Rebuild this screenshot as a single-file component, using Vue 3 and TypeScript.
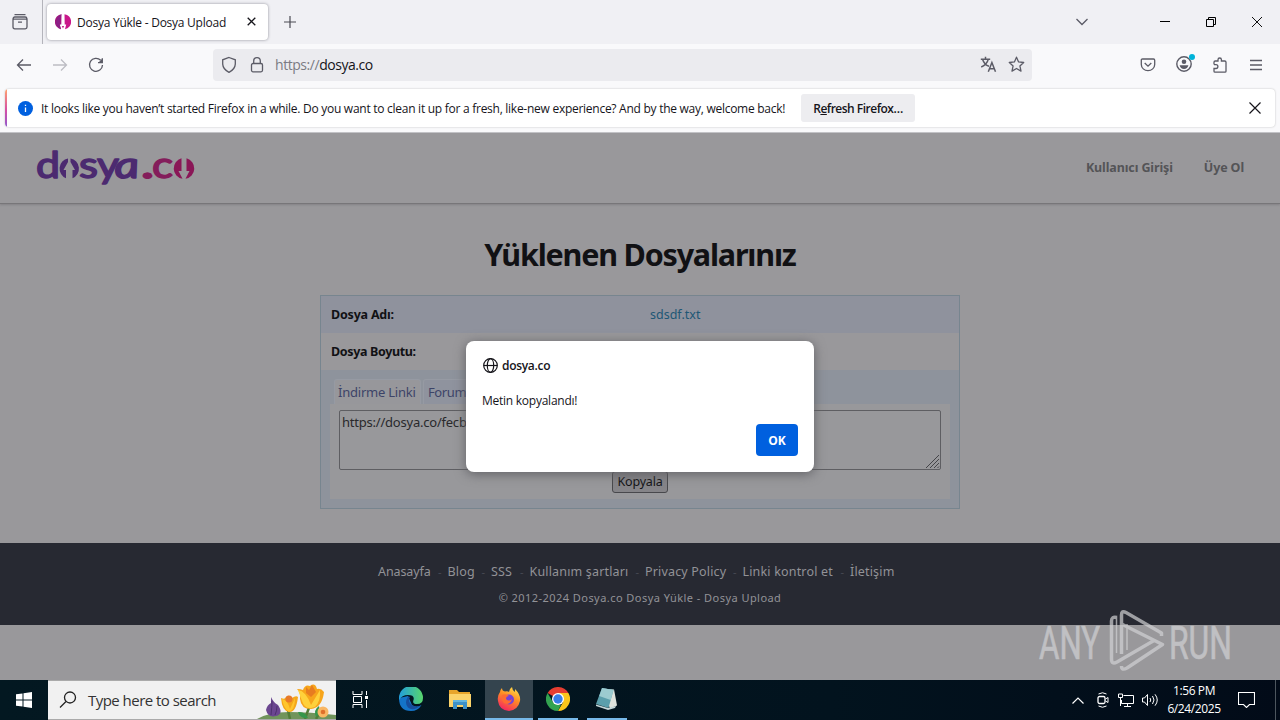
<script setup lang="ts">
interface FooterLink {
  label: string
  width: number
}

const footerLinks: FooterLink[] = [
  { label: 'Anasayfa', width: 53 },
  { label: 'Blog', width: 27 },
  { label: 'SSS', width: 22 },
  { label: 'Kullanım şartları', width: 99 },
  { label: 'Privacy Policy', width: 81 },
  { label: 'Linki kontrol et', width: 91 },
  { label: 'İletişim', width: 44 },
]
</script>

<template>
  <div class="screen">
    <header class="tabbar">
      <div class="archive">
        <svg width="18" height="18" viewBox="0 0 18 18" class="line">
          <path d="M3.5 1.7h11M2.2 7V5.6q0-1.6 1.6-1.6h10.4q1.6 0 1.6 1.6V7M2 6.2h14v7.9q0 1.700-1.700 1.700H3.700Q2 15.800 2 14.100zM7 9.200h4" />
        </svg>
      </div>
      <div class="tab">
        <svg class="favicon" width="16" height="16" viewBox="0 0 16 16">
          <path d="M6.500 .2A7.600 7.600 0 0 0 6 15.200L4.800 10.500H6.300z" fill="#a3187e" />
          <path d="M9.500 .2A7.600 7.600 0 0 1 10 15.200L11.200 10.500H9.700z" fill="#c9188a" />
          <path d="M6.500 .2Q2 2 1 8Q1 13 6 15.200Q4 11 4.800 8Q5 3 6.500 .2z" fill="#8a2087" />
          <path d="M6.900 12h2.200L8 14.500z" fill="#c21585" />
        </svg>
        <span class="tab-title">Dosya Yükle - Dosya Upload</span>
        <svg class="tab-close" width="9" height="9" viewBox="0 0 9 9"><path d="M.7.7l7.600 7.600M8.300.7L.7 8.300" stroke="#15141a" stroke-width="1.300" /></svg>
      </div>
      <svg class="plus" width="12" height="12" viewBox="0 0 12 12"><path d="M6 0v12M0 6h12" stroke="#4a4a52" stroke-width="1.200" /></svg>
      <div class="window-buttons">
        <svg width="12" height="8" viewBox="0 0 12 8" class="line"><path d="M.5 1L6 6.500 11.500 1" /></svg>
        <svg width="10" height="10" viewBox="0 0 10 10"><path d="M0 4.500h10" stroke="#000" /></svg>
        <svg width="10" height="10" viewBox="0 0 10 10"><path d="M.5 2.500h7v7h-7zM2.500 2V.5h7v7H8" fill="none" stroke="#000" /></svg>
        <svg width="10" height="10" viewBox="0 0 10 10"><path d="M0 0l10 10M10 0L0 10" stroke="#111" /></svg>
      </div>
    </header>

    <nav class="toolbar">
      <div class="nav-buttons">
        <svg width="16" height="16" viewBox="0 0 16 16" class="line"><path d="M15 8H1.500M7 2.500L1.500 8 7 13.500" /></svg>
        <svg width="16" height="16" viewBox="0 0 16 16" class="line pale"><path d="M1 8h13.500M9 2.500L14.500 8 9 13.500" /></svg>
        <svg width="16" height="16" viewBox="0 0 16 16" class="line"><path d="M12.700 3.300A6.500 6.500 0 1 0 14.500 8M14.300 1.300v4.300H10" /><path d="M14.500 1.500V5.600H10.500z" fill="#5b5b66" stroke="none" /></svg>
      </div>
      <div class="urlbar">
        <svg width="16" height="18" viewBox="0 0 16 18" class="line"><path d="M8 1.500l6.300 2.300v4.300Q14 13.300 8 16.300 2 13.300 1.700 8.100V3.800z" /></svg>
        <svg width="14" height="18" viewBox="0 0 14 18" class="line"><rect x="1.500" y="7.500" width="11" height="8.300" rx="1.500" /><path d="M3.700 7.500V5a3.300 3.300 0 0 1 6.600 0v2.500" /></svg>
        <span class="url"><span class="scheme">https://</span><span>dosya.co</span></span>
        <svg width="17" height="17" viewBox="0 0 17 17" class="line"><path d="M.8 3.200h9.400M5.500.8v2.400M2.500 3.200Q4.500 9 9 10.200M8.300 3.200Q7 8.700 1.200 11M8.300 15.700l3.600-9.200 3.600 9.200M9.500 12.700h4.800" stroke-width="1.500" /></svg>
        <svg width="17" height="17" viewBox="0 0 17 17" class="line"><path d="M8.500 1.200l2.100 4.700 5.100.6-3.800 3.400 1.100 5.200-4.500-2.600L4 15.100l1.100-5.200L1.300 6.500l5.100-.6z" stroke-linejoin="round" /></svg>
      </div>
      <div class="tools">
        <svg width="16" height="16" viewBox="0 0 16 16" class="line"><path d="M2.500 2h11q1.200 0 1.200 1.200V7.500a6.700 6.200 0 0 1-13.400 0V3.200Q1.300 2 2.500 2zM4.700 6L8 9.200 11.300 6" /></svg>
        <svg width="20" height="20" viewBox="0 0 20 20"><circle cx="9" cy="11" r="7.200" fill="none" stroke="#5b5b66" stroke-width="1.400" /><circle cx="9" cy="8.800" r="2.300" fill="#5b5b66" /><path d="M4.600 12.300h8.800Q12.600 16 9 16T4.600 12.300z" fill="#5b5b66" /><circle cx="17" cy="4" r="3" fill="#00b3d9" /></svg>
        <svg width="16" height="16" viewBox="0 0 16 16" class="line"><path d="M2 7.500V5.200Q2 4 3.200 4H6V2.700a1.700 1.700 0 0 1 3.400 0V4h3.400q1.200 0 1.200 1.200v9.100q0 .9-1 .9H3q-1 0-1-1V11.500h2a1.900 1.900 0 0 0 0-3.800H2" /></svg>
        <svg width="12" height="12" viewBox="0 0 12 12" class="line"><path d="M0 1.500h12M0 6h12M0 10.500h12" /></svg>
      </div>
    </nav>

    <div class="notice-wrap">
      <div class="notice">
        <svg class="info" width="15" height="15" viewBox="0 0 15 15"><circle cx="7.500" cy="7.500" r="7.500" fill="#0060df" /><path d="M7.500 6.500v4.500M7.500 3.700v1.400" stroke="#fff" stroke-width="1.300" /></svg>
        <span class="notice-text">It looks like you haven’t started Firefox in a while. Do you want to clean it up for a fresh, like-new experience? And by the way, welcome back!</span>
        <button class="refresh">R<u>e</u>fresh Firefox…</button>
        <svg class="notice-close" width="12" height="12" viewBox="0 0 12 12"><path d="M.5.5l11 11M11.500.5l-11 11" stroke="#15141a" stroke-width="1.200" /></svg>
      </div>
    </div>

    <main class="page">
      <div class="site-header">
        <svg class="logo" width="162" height="56" viewBox="0 -10 162 56">
          <g class="wordmark violet">
            <text x="0" y="31" textLength="24" lengthAdjust="spacingAndGlyphs">d</text>
            <text x="43" y="31" textLength="19" lengthAdjust="spacingAndGlyphs">s</text>
            <text x="61" y="31" textLength="22" lengthAdjust="spacingAndGlyphs">y</text>
            <text class="slanted" transform="translate(79.500 31) skewX(7)" textLength="25" lengthAdjust="spacingAndGlyphs">a</text>
          </g>
          <g class="wordmark magenta">
            <text x="105" y="31" textLength="13" lengthAdjust="spacingAndGlyphs" stroke-width="2">.</text>
            <text x="116" y="31" textLength="21" lengthAdjust="spacingAndGlyphs">c</text>
          </g>
          <path d="M32 11.500a10 10.300 0 0 0-2 19.800V23h-2.500L32 15zM34.500 11.500a10 10.300 0 0 1 2 19.800V23H39L34.500 15z" fill="#4c2a70" />
          <path d="M145.500 11.300a10.200 10.400 0 0 0 1 20.400L142.500 24h3zM150.500 11.300a10.200 10.400 0 0 1-1 20.400L153.500 24h-3z" fill="#8a1657" />
        </svg>
        <div class="account">
          <span class="login">Kullanıcı Girişi</span>
          <span class="signup">Üye Ol</span>
        </div>
      </div>

      <h1>Yüklenen Dosyalarınız</h1>

      <section class="files">
        <div class="row shaded"><b class="name-label">Dosya Adı:</b><a>sdsdf.txt</a></div>
        <div class="row"><b class="size-label">Dosya Boyutu:</b></div>
        <div class="links">
          <div class="link-tabs">
            <span class="link-tab active">İndirme Linki</span>
            <span class="link-tab forum">Forum</span>
          </div>
          <div class="panel">
            <div class="linkbox">
              <span>https://dosya.co/fecb</span>
              <svg width="15" height="15" viewBox="0 0 15 15"><path d="M1 14L14 1M5 14l9-9M9 14l5-5M12.500 14l1.500-1.500" stroke="#444448" fill="none" /></svg>
            </div>
            <button class="copy">Kopyala</button>
          </div>
        </div>
      </section>

      <footer>
        <div class="footer-links">
          <template v-for="(link, i) in footerLinks" :key="link.label">
            <span v-if="i > 0" class="dash">-</span>
            <span class="footer-link" :style="{ width: link.width + 'px' }">{{ link.label }}</span>
          </template>
        </div>
        <div class="copyright">© 2012-2024 Dosya.co Dosya Yükle - Dosya Upload</div>
      </footer>

      <svg class="watermark" width="204" height="68" viewBox="0 0 204 68">
        <g class="brand">
          <text x="2" y="50" textLength="61" lengthAdjust="spacingAndGlyphs">ANY</text>
          <text x="132" y="50" textLength="63" lengthAdjust="spacingAndGlyphs">RUN</text>
        </g>
        <g class="mark">
          <path d="M80 8.500Q74.500 7 74.500 12V50Q74.500 56 80 53L117 31.500" />
          <path d="M84.500 45V6Q84.500 1 89 3.500L124.500 24V27" />
          <path d="M84.500 15L125.500 35.500 90 59Q84.500 62 84.500 57" />
          <path d="M79.500 8V44M90 15V41" stroke-width="1.500" />
        </g>
      </svg>
    </main>

    <div class="taskbar">
      <div class="start">
        <svg width="16" height="16" viewBox="0 0 16 16" fill="#fff"><path d="M0 2.300L6.500 1.400V7.500H0zM7.500 1.200L16 0V7.500H7.500zM0 8.500h6.500v6.100L0 13.700zM7.500 8.500H16V16L7.500 14.800z" /></svg>
      </div>
      <div class="search">
        <svg width="18" height="18" viewBox="0 0 18 18"><circle cx="11" cy="6.500" r="5.500" fill="none" stroke="#222" stroke-width="1.300" /><path d="M7 10.500L1 16.500" stroke="#222" stroke-width="1.300" /></svg>
        <span>Type here to search</span>
        <svg class="flowers" width="79" height="38" viewBox="0 0 79 38">
          <path d="M0 38Q12 31 32 31T79 34V38z" fill="#70945b" />
          <path d="M33 38Q32 34 31 29M48 38Q50 32 53 24M59 38Q63 32 64 27" fill="none" stroke="#527d38" stroke-width="2.500" />
          <path d="M14 16Q16 21 21 24Q27 33 19 35T9 29Q10 24 14 22z" fill="#6b4690" /><path d="M15 20Q15 26 14 34M20 25Q20 30 18 34" fill="none" stroke="#4c326d" />
          <path d="M24 17Q28 19 29 16Q32 13 35 17Q39 14 41 16Q39 32 32 31Q25 30 24 17z" fill="#f5a719" />
          <path d="M25 18Q30 18 33 28L38 17Q38 29 32 31Q27 28 25 18z" fill="#ffc52c" /><circle cx="32" cy="18" r="3.500" fill="#e7792a" />
          <path d="M40 8Q44 8 46 9Q48 3 53 5Q58 1 60 8Q64 7 67 11Q65 27 54 28Q44 28 43 18Q44 12 40 8z" fill="#f7a51b" />
          <path d="M41 9Q49 10 54 24L63 9Q64 20 58 26Q48 30 45 20z" fill="#ffd13b" /><path d="M49 6l3 3 3-5 4 7-5 5-5-4z" fill="#e77c20" />
          <path d="M41 31Q48 30 51 37Q43 38 41 31zM59 36Q64 33 62 25Q56 29 59 36z" fill="#35964b" />
          <circle cx="66" cy="31" r="5.500" fill="#f9b764" /><circle cx="66" cy="31" r="2.300" fill="#df702c" />
        </svg>
      </div>
      <div class="task view">
        <svg width="16" height="17" viewBox="0 0 16 17" fill="none" stroke="#fff"><path d="M1 0v3.500h9V0M1 17v-3.500h9V17M1.500 5.500h8v6h-8zM14.500 0v4M14.500 9v8" /><path d="M13 5h3v3h-3z" fill="#fff" stroke="none" /></svg>
      </div>
      <div class="task edge">
        <svg width="24" height="24" viewBox="0 0 24 24">
          <defs>
            <linearGradient id="edge-top" x1="0" y1="0" x2="1" y2="0"><stop stop-color="#219edc" /><stop offset="1" stop-color="#58d66c" /></linearGradient>
          </defs>
          <path d="M0 11Q0 24 12 24Q19 24 22.500 18Q17 21 13 18L9 9z" fill="#1474c8" />
          <path d="M0 11A12 12 0 0 1 24 11Q24 17 18 17Q13 17 14.500 13Q16 8 9 8Q3 8 0 13z" fill="url(#edge-top)" />
          <path d="M9 9.500Q5 16 9 20.500Q14 25 22.500 18Q18 21 14 18.500Q8 15 11 10z" fill="#174e9d" />
        </svg>
      </div>
      <div class="task explorer">
        <svg width="22" height="20" viewBox="0 0 22 20"><path d="M0 1h8l2 2h11v4H0z" fill="#e7a52b" /><path d="M0 5h22v13H0z" fill="#fbd36a" /><path d="M4 11h14v9h-4v-4H8v4H4z" fill="#3c91c9" /><path d="M4 11h14v2H4z" fill="#62b5df" /></svg>
      </div>
      <div class="task firefox">
        <svg width="24" height="24" viewBox="0 0 24 24">
          <defs>
            <linearGradient id="fox" x1=".8" y1="0" x2=".3" y2="1"><stop stop-color="#ffe34b" /><stop offset=".45" stop-color="#ff8c24" /><stop offset="1" stop-color="#f52264" /></linearGradient>
          </defs>
          <path d="M3 5Q3 3 5 1Q5 4 8 4.500Q11 4 12 5Q12 2 15 0Q15 3 18 5Q18 3 18 2Q24 8 23 14Q21 23 12 24Q2 23 1 14Q0 9 3 5z" fill="url(#fox)" />
          <circle cx="12" cy="12.500" r="5" fill="#7542d5" /><path d="M5 8Q9 6 12 9Q9 9 9 12Q12 15 15 12Q13 19 7 16Q4 13 5 8z" fill="#ff6b32" />
        </svg>
      </div>
      <div class="task chrome">
        <svg width="24" height="24" viewBox="0 0 24 24">
          <path d="M12 12L1.600 6A12 12 0 0 1 22.400 6z" fill="#e53d31" />
          <path d="M12 6h10.400A12 12 0 0 1 12 24l5.200-9z" fill="#fbc51b" /><path d="M1.600 6l5.200 9 8 3L12 24A12 12 0 0 1 1.600 6z" fill="#32a350" /><circle cx="12" cy="12" r="6" fill="#fff" /><circle cx="12" cy="12" r="4.700" fill="#377de8" />
        </svg>
      </div>
      <div class="task notepad">
        <svg width="24" height="24" viewBox="0 0 24 24"><path d="M8 1.500l12 1 3 16-7 3z" fill="#dfe3dd" /><path d="M8 1l11.500 2-5 18L2 17z" fill="#5b9fac" /><path d="M8 1l11.500 2-2.800 10-11.500-4z" fill="#9ccbd0" /><path d="M2 17.500l12 3.500 8-2-1 2-7 2-12-4z" fill="#c4d7d9" /></svg>
      </div>
      <div class="tray">
        <svg width="12" height="7" viewBox="0 0 12 7" fill="none" stroke="#fff"><path d="M.5 6.500L6 1l5.500 5.500" stroke-width="1.200" /></svg>
        <svg width="12" height="16" viewBox="0 0 12 16" fill="none" stroke="#fff"><rect x="1" y="4.500" width="7" height="7" rx="1.500" stroke-width="1.300" /><path d="M8.500 7l2.500-1.500v5L8.500 9M1.500 2Q5.500-.5 9.500 2M1.500 14q4 2.500 8 0" /></svg>
        <svg width="17" height="14" viewBox="0 0 17 14" fill="none" stroke="#fff"><path d="M5.500 2.500h10v8h-12V7M9.500 10.500v3M6 13.500h7M.5 1h4v3.500h-4zM2.500 5v8" /></svg>
        <svg width="17" height="14" viewBox="0 0 17 14" fill="none" stroke="#fff"><path d="M.5 5h2l3-3.500v11L2.500 9h-2zM8 5q1.500 2 0 4M10.500 3q3 4 0 8M13 1.300q4.500 5.700 0 11.400" /></svg>
        <div class="clock"><span class="time">1:56 PM</span><span class="date">6/24/2025</span></div>
        <svg width="17" height="16" viewBox="0 0 17 16" fill="none" stroke="#fff"><path d="M.5.500h16v12h-5l-3 3-3-3h-5z" stroke-width="1.100" /></svg>
      </div>
      <div class="show-desktop"></div>
    </div>

    <div class="dialog" role="alertdialog">
      <div class="origin">
        <svg width="15" height="15" viewBox="0 0 15 15" fill="none" stroke="#15141a" stroke-width="1.200"><circle cx="7.500" cy="7.500" r="6.800" /><ellipse cx="7.500" cy="7.500" rx="3.200" ry="6.800" /><path d="M.7 7.500h13.600" /></svg>
        <span>dosya.co</span>
      </div>
      <p>Metin kopyalandı!</p>
      <button class="ok">OK</button>
    </div>
  </div>
</template>

<style>
body { overflow: hidden; }
</style>

<style scoped>
* { box-sizing: border-box; }
svg { display: block; flex: none; }
button { border: 0; padding: 0; font: inherit; }
.screen { position: relative; display: flex; flex-direction: column; width: 1280px; height: 720px; overflow: hidden; background: #99989b; color: #15141a; font-family: "Open Sans", "Noto Sans", sans-serif; font-size: 12px; white-space: nowrap; }
.line { fill: none; stroke: #5b5b66; stroke-width: 1.3; }
.pale { stroke: #bdbdc3; }
.tabbar { display: flex; align-items: center; height: 44px; flex: none; background: #f0f0f4; }
.archive { display: flex; align-items: center; width: 43px; height: 44px; padding-left: 11px; border-right: 1px solid #b4b4bb; }
.tab { display: flex; align-items: center; width: 221px; height: 36px; margin: 0 1px 1px 4px; padding-left: 8px; border-radius: 4px; background: #fff; box-shadow: 0 0 3px #8e8e96; }
.tab-title { width: 156px; margin-left: 6px; padding-top: 2px; letter-spacing: -0.25px; }
.tab-close { margin-left: 14px; }
.plus { margin-left: 15px; }
.window-buttons { display: flex; align-items: center; margin-left: auto; padding-right: 18px; }
.window-buttons svg + svg { margin-left: 36px; }
.window-buttons svg:nth-child(2) { margin-left: 72px; }
.toolbar { display: flex; align-items: center; height: 44px; flex: none; padding: 0 18px 3px 16px; background: #f9f9fb; }
.nav-buttons { display: flex; gap: 20px; width: 197px; }
.urlbar { display: flex; align-items: center; width: 819px; height: 32px; padding-left: 8px; border-radius: 4px; background: #ebebef; }
.urlbar svg:nth-child(2) { margin-left: 13px; }
.urlbar svg:nth-child(4) { margin-left: auto; }
.urlbar svg:nth-child(5) { margin: 0 7px 0 11px; }
.url { margin-left: 11px; font-size: 14px; letter-spacing: -0.45px; }
.scheme { color: #7b7b83; }
.tools { display: flex; align-items: center; margin-left: auto; }
.tools svg:nth-child(2) { margin: -3px 0 0 19px; }
.tools svg:nth-child(3) { margin-left: 17px; }
.tools svg:nth-child(4) { margin-left: 22px; }
.notice-wrap { height: 45px; flex: none; padding: 1px 5px 5px; background: #f9f9fb; border-bottom: 1px solid #c7c7cc; }
.notice { position: relative; display: flex; align-items: center; height: 38px; padding: 0 14px 0 13px; overflow: hidden; border-radius: 4px; background: #fff; box-shadow: 0 0 2px #bbb; }
.notice::before { content: ""; position: absolute; inset: 0 auto 0 0; width: 2px; background: linear-gradient(#ffa36e, #d64fa5 55%, #9059cc); }
.notice-text { width: 745px; margin: 1px 0 0 8px; letter-spacing: -0.267px; }
.refresh { width: 114px; height: 28px; margin-left: 15px; border-radius: 3px; background: #ededf0; color: #15141a; font-weight: 600; letter-spacing: -0.5px; }
.notice-close { margin-left: auto; }
.page { position: relative; height: 547px; flex: none; color: #111114; font-family: "Noto Sans", "Open Sans", sans-serif; }
.site-header { display: flex; align-items: center; justify-content: space-between; height: 71px; padding: 0 36px; border-bottom: 1px solid #777679; box-shadow: 0 1px 2px #838286; }
.logo { margin-bottom: 7px; }
.wordmark { font: 400 37px Lato, sans-serif; stroke-width: 1.5; stroke-linejoin: round; }
.wordmark .slanted { font-style: italic; }
.violet { fill: #4c2a70; stroke: #4c2a70; }
.magenta { fill: #841d5b; stroke: #841d5b; }
.account { display: flex; gap: 31px; padding-bottom: 2px; font-size: 12.5px; font-weight: 700; letter-spacing: -0.12px; color: #545457; }
h1 { display: flex; justify-content: center; margin: 28px 0 19px; height: 44px; align-items: center; font-size: 30.5px; font-weight: 700; letter-spacing: -1.2px; }
.files { width: 640px; height: 214px; margin: 0 auto; border: 1px solid #77858f; }
.row { display: flex; align-items: center; height: 37px; padding-left: 10px; font-size: 12.5px; }
.shaded { background: #8f929d; }
.row b { width: 319px; letter-spacing: -0.2px; }
.row .size-label { letter-spacing: -0.35px; }
.row a { color: #1e5775; }
.links { height: 138px; padding: 9px; background: #8e939c; }
.link-tabs { display: flex; gap: 2px; height: 25px; padding-left: 4px; font-size: 13px; letter-spacing: -0.22px; color: #3d4468; }
.link-tab { height: 25px; padding: 3px; border: 1px solid #969aa3; border-bottom: 0; border-radius: 3px 3px 0 0; }
.active { width: 87px; background: #97979b; }
.forum { width: 90px; padding-left: 4px; letter-spacing: -0.4px; background: #8f939e; }
.panel { display: flex; flex-direction: column; align-items: center; height: 95px; padding-top: 6px; background: #98989b; }
.linkbox { display: flex; align-items: flex-end; justify-content: space-between; width: 602px; height: 60px; border: 1px solid #5e5e62; border-radius: 2px; color: #29292c; font-size: 13px; }
.linkbox span { align-self: flex-start; padding: 2px; letter-spacing: -0.22px; }
.copy { width: 56px; height: 22px; margin-top: 1px; border: 1px solid #48484c; border-radius: 3px; background: #858488; color: #111114; font-size: 12.5px; letter-spacing: -0.2px; line-height: 18px; }
footer { height: 82px; margin-top: 34px; padding-top: 17px; background: #272932; color: #929297; }
.footer-links { display: flex; justify-content: center; align-items: center; height: 22px; margin-left: -8px; font-size: 12.5px; letter-spacing: .17px; }
.footer-link { display: block; }
.footer-link:first-child { letter-spacing: -0.1px; }
.dash { width: 16.5px; padding-left: 7px; color: #484a54; font-size: 11px; }
.copyright { height: 20px; margin-top: 6px; font-size: 11px; line-height: 20px; text-align: center; letter-spacing: .45px; }
.watermark { position: absolute; left: 1037px; top: 476px; opacity: .7; }
.brand { fill: #d1d1d4; stroke: #d1d1d4; stroke-width: .7; font: 46px Roboto, sans-serif; font-weight: 400; }
.mark { fill: none; stroke: #d1d1d4; stroke-width: 3.5; stroke-linejoin: round; }
.taskbar { display: flex; height: 40px; flex: none; background: linear-gradient(90deg, #031821, #02131e 65%, #020b18); color: #fff; }
.start { display: flex; align-items: center; justify-content: center; width: 48px; }
.search { display: flex; align-items: center; width: 288px; border-top: 1px solid #aaa; border-bottom: 1px solid #aaa; background: #f1f1f1; color: #333; font-size: 15px; }
.search > svg:first-child { margin-left: 11px; }
.search span { width: 132px; margin-left: 11px; letter-spacing: -0.53px; }
.flowers { margin-left: auto; }
.task { display: flex; align-items: center; justify-content: center; width: 49px; border-bottom: 2px solid transparent; }
.view { padding-right: 2px; }
.edge { width: 52px; }
.explorer { width: 47px; padding-right: 2px; }
.firefox { width: 48px; margin-left: 1px; background: #34444e; border-color: #77b9e9; }
.chrome { width: 40px; margin-left: 5px; border-color: #77b9e9; }
.notepad { width: 40px; margin-left: 9px; padding-right: 2px; border-color: #77b9e9; }
.tray { display: flex; align-items: center; margin-left: auto; padding-right: 20px; }
.tray svg:nth-child(2) { margin-left: 13px; }
.tray svg:nth-child(3) { margin-left: 9px; }
.tray svg:nth-child(4) { margin-left: 7px; }
.clock { display: flex; flex-direction: column; align-items: center; width: 54px; margin: 0 17px 0 8px; line-height: 18px; letter-spacing: -0.4px; }
.show-desktop { width: 5px; border-left: 1px solid #4d565e; }
.dialog { position: absolute; left: 466px; top: 341px; width: 348px; height: 131px; padding: 16px; border-radius: 8px; background: #fff; box-shadow: 0 2px 12px #606064; }
.origin { display: flex; align-items: center; gap: 4px; height: 17px; padding-left: 1px; font-weight: 600; letter-spacing: -0.3px; }
.dialog p { height: 20px; margin: 17px 0 13px; line-height: 20px; letter-spacing: -0.25px; }
.ok { display: block; width: 42px; height: 32px; margin-left: auto; border-radius: 4px; background: #0060df; color: #fff; font-weight: 700; }
</style>
